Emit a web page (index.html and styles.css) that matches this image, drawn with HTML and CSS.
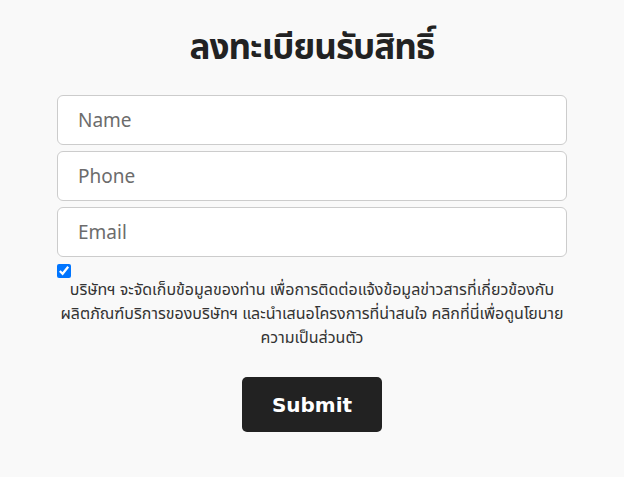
FILE: index.html
```html
<!DOCTYPE html>
<html lang="th">
<head>
<meta charset="utf-8">
<link rel="stylesheet" href="styles.css">
</head>
<body>
<div class="wrap">
  <h1 class="title">ลงทะเบียนรับสิทธิ์</h1>
  <form class="form">
    <input class="field" type="text" placeholder="Name">
    <input class="field" type="text" placeholder="Phone">
    <input class="field" type="text" placeholder="Email">
    <div class="consent">
      <input class="check" type="checkbox" checked>
      <p class="note">บริษัทฯ จะจัดเก็บข้อมูลของท่าน เพื่อการติดต่อแจ้งข้อมูลข่าวสารที่เกี่ยวข้องกับผลิตภัณฑ์บริการของบริษัทฯ และนำเสนอโครงการที่น่าสนใจ คลิกที่นี่เพื่อดูนโยบายความเป็นส่วนตัว</p>
    </div>
    <div class="actions">
      <button class="submit" type="button">Submit</button>
    </div>
  </form>
</div>
</body>
</html>
```
FILE: styles.css
```css
html, body {
  margin: 0;
  padding: 0;
  background: #f9f9f9;
}
body {
  font-family: "Noto Sans Thai", "Noto Sans", sans-serif;
  color: #222;
}
.wrap {
  width: 510px;
  margin: 0 auto;
  padding-top: 22px;
}
.title {
  margin: 0 0 19px;
  height: 54px;
  text-align: center;
  font-size: 35px;
  font-weight: 700;
  letter-spacing: -1px;
  line-height: 54px;
  color: #222;
}
.form {
  display: flex;
  flex-direction: column;
  gap: 6px;
}
.field {
  box-sizing: border-box;
  width: 100%;
  height: 50px;
  padding: 3px 20px 0;
  border: 1px solid #ccc;
  border-radius: 6px;
  background: #fff;
  font-family: "Noto Sans Thai", "Noto Sans", sans-serif;
  font-size: 19px;
  color: #333;
}
.field::placeholder {
  color: #6c6c6c;
}
.consent {
  padding-top: 1px;
}
.check {
  display: block;
  margin: 0;
  width: 14px;
  height: 14px;
}
.note {
  margin: 0;
  text-align: center;
  font-size: 16px;
  line-height: 24px;
  color: #333;
}
.actions {
  display: flex;
  justify-content: center;
  padding-top: 21px;
}
.submit {
  height: 55px;
  padding: 0 30px;
  border: none;
  border-radius: 5px;
  background: #222;
  color: #fff;
  font-family: "DejaVu Sans", sans-serif;
  font-weight: 700;
  font-size: 20px;
}
```
